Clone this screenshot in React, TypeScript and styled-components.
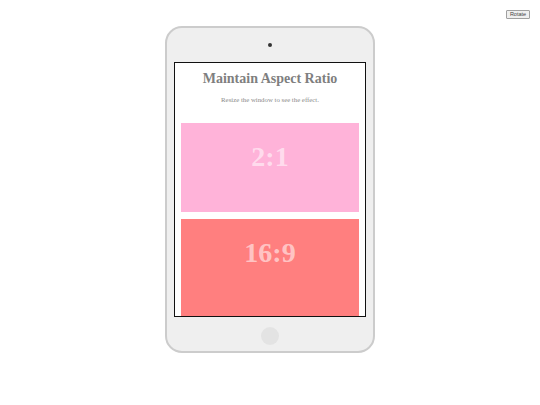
import styled, { createGlobalStyle } from 'styled-components';

const GlobalStyle = createGlobalStyle`
  html, body {
    margin: 0;
    padding: 0;
    background: #ffffff;
  }
  body {
    font-family: "Liberation Serif", "Times New Roman", serif;
  }
`;

const Page = styled.div`
  width: 540px;
  height: 405px;
  display: flex;
  flex-direction: column;
  align-items: center;
  padding-top: 10px;
  box-sizing: border-box;
`;

const Toolbar = styled.div`
  align-self: stretch;
  display: flex;
  justify-content: flex-end;
  padding-right: 10px;
  height: 9px;
`;

const RotateButton = styled.button`
  height: 9px;
  width: 24px;
  padding: 0;
  font-family: "Liberation Sans", Arial, sans-serif;
  font-size: 5.5px;
  line-height: 7px;
  color: #444;
  background: #efefef;
  border: 1px solid #a0a0a0;
  border-radius: 1px;
`;

const Device = styled.div`
  margin-top: 7px;
  width: 210px;
  height: 327px;
  box-sizing: border-box;
  border: 2px solid #cccccc;
  border-radius: 17px;
  background: #efefef;
  display: flex;
  flex-direction: column;
  align-items: center;
  padding: 0 7px;
`;

const Bezel = styled.div<{ $offset: number }>`
  height: 34px;
  align-self: stretch;
  display: flex;
  align-items: center;
  justify-content: center;
  padding-top: ${({ $offset }) => $offset}px;
  box-sizing: border-box;
`;

const Camera = styled.div`
  width: 4px;
  height: 4px;
  border-radius: 50%;
  background: #333333;
`;

const HomeButton = styled.div`
  width: 18px;
  height: 18px;
  border-radius: 50%;
  background: #e3e3e3;
`;

const Screen = styled.div`
  width: 192px;
  height: 255px;
  box-sizing: border-box;
  border: 1px solid #111111;
  background: #ffffff;
  overflow: hidden;
  padding: 0 6px;
`;

const Title = styled.h1`
  margin: 7px 0 0;
  font-size: 14px;
  line-height: 17px;
  font-weight: bold;
  color: #7f7f7f;
  text-align: center;
`;

const Subtitle = styled.p`
  margin: 8px 0 0;
  font-size: 6.8px;
  line-height: 9px;
  color: #8a8a8a;
  text-align: center;
`;

const Boxes = styled.div`
  margin-top: 19px;
  display: flex;
  flex-direction: column;
  gap: 7px;
`;

const RatioBox = styled.div<{ $ratio: string; $color: string; $textTop: number }>`
  width: 100%;
  aspect-ratio: ${({ $ratio }) => $ratio};
  background: ${({ $color }) => $color};
  display: flex;
  justify-content: center;
  align-items: flex-start;
  padding-top: ${({ $textTop }) => $textTop}px;
  box-sizing: border-box;
  font-size: 28px;
  line-height: 32px;
  font-weight: bold;
  color: rgba(255, 255, 255, 0.55);
`;

export default function App() {
  return (
    <>
      <GlobalStyle />
      <Page>
        <Toolbar>
          <RotateButton>Rotate</RotateButton>
        </Toolbar>
        <Device>
          <Bezel $offset={0}>
            <Camera />
          </Bezel>
          <Screen>
            <Title>Maintain Aspect Ratio</Title>
            <Subtitle>Resize the window to see the effect.</Subtitle>
            <Boxes>
              <RatioBox $ratio="2 / 1" $color="#ffb3d9" $textTop={18}>
                2:1
              </RatioBox>
              <RatioBox $ratio="16 / 9" $color="#ff7f7f" $textTop={18}>
                16:9
              </RatioBox>
            </Boxes>
          </Screen>
          <Bezel $offset={4}>
            <HomeButton />
          </Bezel>
        </Device>
      </Page>
    </>
  );
}
